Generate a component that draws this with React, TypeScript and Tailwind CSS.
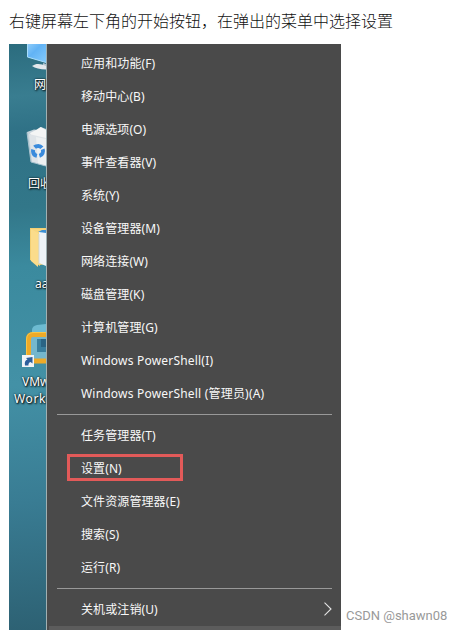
import { ReactNode } from 'react';

type TMenuItem = {
  label: string;
  wide?: boolean;
  highlighted?: boolean;
  submenu?: boolean;
};

const menuGroups: TMenuItem[][] = [
  [
    { label: '应用和功能(F)' },
    { label: '移动中心(B)' },
    { label: '电源选项(O)' },
    { label: '事件查看器(V)' },
    { label: '系统(Y)' },
    { label: '设备管理器(M)' },
    { label: '网络连接(W)' },
    { label: '磁盘管理(K)' },
    { label: '计算机管理(G)' },
    { label: 'Windows PowerShell(I)', wide: true },
    { label: 'Windows PowerShell (管理员)(A)', wide: true }
  ],
  [
    { label: '任务管理器(T)' },
    { label: '设置(N)', highlighted: true },
    { label: '文件资源管理器(E)' },
    { label: '搜索(S)' },
    { label: '运行(R)' }
  ],
  [{ label: '关机或注销(U)', submenu: true }]
];

const MenuItem = ({ label, wide, highlighted, submenu }: TMenuItem) => (
  <li className="relative flex h-[33px] items-center justify-between pr-[9px] pl-[34px]">
    <span
      className={`whitespace-nowrap ${wide ? 'tracking-[0.2px]' : 'tracking-[0.1px]'}`}
    >
      {label}
    </span>
    {highlighted && (
      <span className="absolute top-[2px] left-[20px] h-[27px] w-[116px] border-3 border-[#e25a59]" />
    )}
    {submenu && (
      <svg
        className="mb-[2px] h-[14px] w-[8px]"
        viewBox="0 0 8 14"
        fill="none"
        stroke="#e4e4e4"
        strokeWidth={1.1}
      >
        <path d="M0.5 0.7 7 7 0.5 13.3" />
      </svg>
    )}
  </li>
);

const ComputerIcon = () => (
  <svg className="block h-[31px] w-[37px]" viewBox="0 0 37 31">
    <defs>
      <linearGradient id="screen" x1="0" y1="0" x2="1" y2="1">
        <stop offset="0" stopColor="#8fcdfa" />
        <stop offset="0.4" stopColor="#62b3f5" />
        <stop offset="1" stopColor="#84cbfc" />
      </linearGradient>
    </defs>
    <path d="M18 0H37V18.5L18 13Z" fill="url(#screen)" />
    <path d="M18.500 0V13L37 18.5" fill="none" stroke="#a8ddfb" />
    <path d="M34 19 37 20V23H34Z" fill="#b7c5cf" />
    <path d="M23 22C27 19 32 19.500 37 22V25.500C31 25.500 26 24 23 22Z" fill="#e3e8ec" />
  </svg>
);

const RecycleBinIcon = () => (
  <svg className="block h-[44px] w-[37px]" viewBox="0 0 37 44">
    <path d="M18 7 25 4.500 29 5 32 2 37 4V40L22 37Z" fill="#c5d3db" />
    <path d="M21 8 27 5 31.500 2 37 5V17L23 13Z" fill="#f4f5f5" />
    <path d="M20 9 37 13V41L23 37Z" fill="#dfe4e8" />
    <path d="M27 12 37 14V41L29 39Z" fill="#edf0f1" />
    <path d="M18 7.500 22 37 37 41" fill="none" stroke="#a9c3cf" />
    <circle
      cx="29"
      cy="26"
      r="5"
      fill="none"
      stroke="#3a8bdc"
      strokeWidth="4"
      strokeDasharray="8 2.47"
      transform="rotate(-20 29 26)"
    />
  </svg>
);

const FolderIcon = () => (
  <svg className="block h-[43px] w-[37px]" viewBox="0 0 37 43">
    <path d="M21 1H37V37L31 38 21 33Z" fill="#f3cf74" />
    <path d="M22 2H36L31 5V39L22 33Z" fill="#f8d780" />
    <path d="M30 5 37 3V39L30 36Z" fill="#eef3f7" />
    <path d="M29 5 33 3H37V6L30 5Z" fill="#3c8fd3" />
    <path d="M22 2 29 6V40L22 34Z" fill="#fbdc8b" />
    <path d="M30 7V37" stroke="#d1dae0" />
  </svg>
);

const VMwareIcon = () => (
  <svg className="block h-[46px] w-[37px]" viewBox="0 0 37 46">
    <path d="M23 12V7Q23 3 28 2L37 1V12Z" fill="#6dbbd1" />
    <path d="M22 14H37V36H22Z" fill="#74b7cd" />
    <path d="M28 16H37V29H28Z" fill="#397f9f" />
    <path d="M32 16H37V24H32Z" fill="#2a6484" />
    <path d="M37 11.500H24Q19.500 11.500 19.500 16V38H37" fill="none" stroke="#edaa28" strokeWidth="5" />
    <path d="M37 9.500H24Q17.500 10 17.500 17V33" fill="none" stroke="#f9c646" />
    <path d="M13 32H25V44H13Z" fill="#f1f4f7" />
    <path
      d="M16 42.500Q15 37.500 18.500 36.500L17 35 23.500 34V40.500L21.500 39Q19 40 19.500 42.500Z"
      fill="#2d5f9c"
    />
  </svg>
);

const DesktopLabel = ({ children, className }: { children: ReactNode; className: string }) => (
  <p
    className={`overflow-hidden whitespace-nowrap text-white [text-shadow:1px_1px_2px_#000,0_0_2px_#000] ${className}`}
  >
    {children}
  </p>
);

const Desktop = () => (
  <div className="w-[37px] shrink-0 overflow-hidden bg-[linear-gradient(175deg,#2b6c7e_0%,#397d90_9%,#2f7186_15%,#327789_28%,#3b8a9e_38%,#4391a6_58%,#397c93_78%,#2d6173_100%)] text-[12px] leading-[17px]">
    <ComputerIcon />
    <DesktopLabel className="mt-[1px] pl-[25px]">网</DesktopLabel>
    <div className="mt-[32px]">
      <RecycleBinIcon />
    </div>
    <DesktopLabel className="mt-[6px] pl-[19px]">回收</DesktopLabel>
    <div className="mt-[35px]">
      <FolderIcon />
    </div>
    <DesktopLabel className="mt-[5px] pl-[26px]">aa</DesktopLabel>
    <div className="mt-[31px]">
      <VMwareIcon />
    </div>
    <DesktopLabel className="mt-[4px] pl-[13px]">VMw</DesktopLabel>
    <DesktopLabel className="pl-[5px] tracking-[0.6px]">Work</DesktopLabel>
  </div>
);

const App = () => {
  return (
    <div className="h-[630px] w-[462px] overflow-hidden bg-white px-[9px] font-['Noto_Sans','Noto_Sans_CJK_SC',sans-serif]">
      <p className="flex h-[44px] items-center pb-[4px] font-['Noto_Sans_CJK_SC',sans-serif] text-[16px] font-light whitespace-nowrap text-[#111]">
        右键屏幕左下角的开始按钮，在弹出的菜单中选择设置
      </p>
      <div className="flex h-[586px]">
        <div className="flex w-[332px] shrink-0">
          <Desktop />
          <div className="flex flex-1 flex-col border-l border-[#a0b0b2] bg-[#4a4a4a] pt-[3px] text-[12px] text-[#f8f8f8]">
            {menuGroups.map((group, index) => (
              <div key={index}>
                {index > 0 && (
                  <div className="mr-[9px] ml-[10px] h-[9px] pt-[4px]">
                    <div className="h-px bg-[#999]" />
                  </div>
                )}
                <ul>
                  {group.map((item) => (
                    <MenuItem key={item.label} {...item} />
                  ))}
                </ul>
              </div>
            ))}
            <div className="ml-[2px] flex-1 bg-[#5c5c5c]" />
          </div>
        </div>
        <p className="self-end pb-[5px] pl-[5px] font-['Roboto',sans-serif] text-[13px] leading-[18px] whitespace-nowrap text-[#999]">
          CSDN @shawn08
        </p>
      </div>
    </div>
  );
};

export default App;
